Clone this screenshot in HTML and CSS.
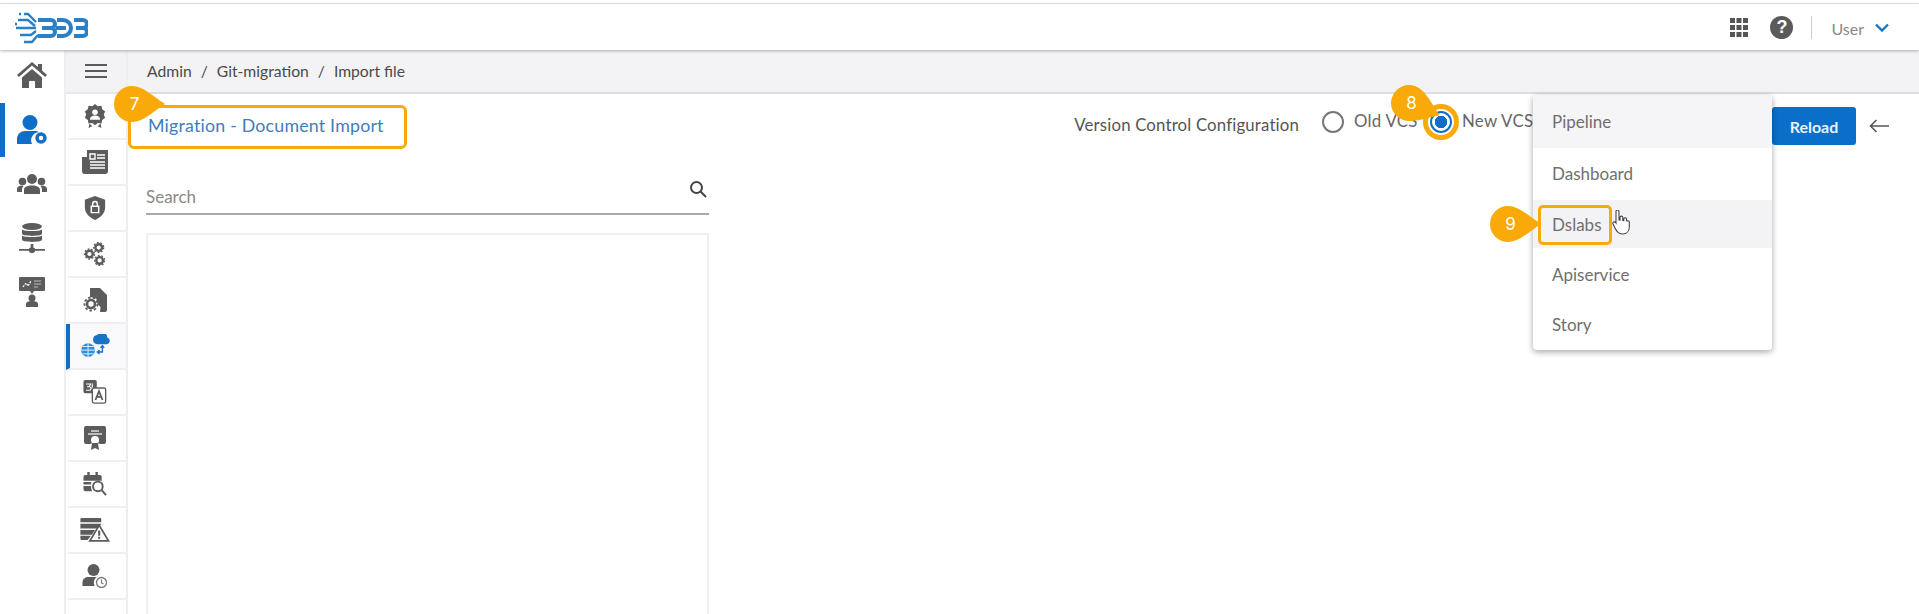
FILE: index.html
```html
<!DOCTYPE html>
<html lang="en">
<head>
<meta charset="utf-8">
<title>Migration - Document Import</title>
<link rel="stylesheet" href="styles.css">
</head>
<body>
<svg class="defs" width="0" height="0" aria-hidden="true"><defs>
  <path id="drop" d="M18 0C29 0 40 11 51 18C40 25 29 36 18 36A18 18 0 0 1 18 0Z"/>
</defs></svg>
<header class="header">
  <svg class="logo" viewBox="0 0 73 33" fill="none" stroke="#2a80c4" stroke-width="4">
    <path d="M23 9H36a4 4 0 0 1 0 8H27M36 17a4 4 0 0 1 0 8H23"/>
    <path d="M42 9h6a8 8 0 0 1 0 16h-6M41 17h10"/>
    <path d="M59 9h9a4 4 0 0 1 0 8h-7M68 17a4 4 0 0 1 0 8h-9"/>
    <path stroke-width="2.400" d="M9 3h4l8 8M3 9h10l7 6M1 17h20M5 24h11l5-4M9 31h8l6-7"/>
    <path stroke-width="2.600" stroke-dasharray="2 3" d="M4 3h3M0 13h3"/>
  </svg>
  <div class="header-tools">
    <svg class="apps" viewBox="0 0 18 19" fill="#555"><path d="M0 0h5v5H0zM6.500 0h5v5h-5zM13 0h5v5h-5zM0 7h5v5H0zM6.500 7h5v5h-5zM13 7h5v5h-5zM0 14h5v5H0zM6.500 14h5v5h-5zM13 14h5v5h-5z"/></svg>
    <span class="help">?</span>
    <span class="divider"></span>
    <span class="user">User</span>
    <svg class="chevron" viewBox="0 0 14 9" fill="none" stroke="#1b76c4" stroke-width="2.400"><path d="M1 1.500l6 6 6-6"/></svg>
  </div>
</header>
<main class="main">
  <nav class="rail">
    <div class="rail-item first"><svg viewBox="0 0 30 26" fill="#5c5c5c"><path d="M15 0L0 13l1.800 2L15 3.600 28.200 15l1.800-2-5-4.400V2h-4v3.100zM5 15.500V26h7v-7h6v7h7V15.500L15 7z"/></svg></div>
    <div class="rail-item active"><svg viewBox="0 0 30 30" fill="#0f6fc6"><circle cx="13" cy="7.500" r="7.500"/><path d="M0 29v-5c0-5 4-8 8-8h10c1.500 0 3 .5 4 1.300A8 8 0 0 0 15 29z"/><circle cx="24" cy="23" r="4" fill="none" stroke="#0f6fc6" stroke-width="3.400"/></svg></div>
    <div class="rail-item"><svg viewBox="0 0 30 20" fill="#5c5c5c"><circle cx="15" cy="5" r="5"/><circle cx="5.500" cy="7.500" r="3.800"/><circle cx="24.500" cy="7.500" r="3.800"/><path d="M7 20v-4c0-3 3-4.500 8-4.500s8 1.500 8 4.500v4zM0 18v-3c0-2 2-3.500 5.500-3.500l1 .5C5.500 13 5 14.500 5 16v2zM30 18v-3c0-2-2-3.500-5.500-3.500l-1 .5c1 1 1.500 2.500 1.500 4v2z"/></svg></div>
    <div class="rail-item"><svg viewBox="0 0 26 30" fill="#5c5c5c"><ellipse cx="13" cy="3.500" rx="10" ry="3.500"/><path d="M3 6.500c2 2 18 2 20 0V11c-2 2.500-18 2.500-20 0zM3 12.500c2 2 18 2 20 0V17c-2 2.500-18 2.500-20 0zM11.700 21h2.600v3.500a3 3 0 0 1 2 1.500H26v1.800h-9.700a3.500 3.500 0 0 1-6.600 0H0V26h9.700a3 3 0 0 1 2-1.500z"/></svg></div>
    <div class="rail-item"><svg viewBox="0 0 26 30" fill="#5c5c5c"><path d="M1 0h24a1 1 0 0 1 1 1v12a1 1 0 0 1-1 1H15l-2 3-2-3H1a1 1 0 0 1-1-1V1a1 1 0 0 1 1-1z"/><path d="M4 10l3-4 2 3 3-5" fill="none" stroke="#fff" stroke-width="1.200" stroke-dasharray="2 1"/><path d="M15 4h7M15 7h7M15 10h4" stroke="#bbb" stroke-width="1.200"/><circle cx="13" cy="21" r="3.500"/><path d="M7 30v-3c0-2 2-3 6-3s6 1 6 3v3z"/></svg></div>
  </nav>
  <nav class="subrail">
    <div class="menu-cell"><svg viewBox="0 0 22 14" fill="#5a5a5a"><path d="M0 0h22v2H0zM0 6h22v2H0zM0 12h22v2H0z"/></svg></div>
    <div class="sub-item"><svg viewBox="0 0 24 26" fill="#5c5c5c"><path d="M12 0l3 2.500 4-.5.800 3.700L23 8l-1.500 3.500L23 15l-3.200 2.300-.8 3.700-4-.5-3 2.500-3-2.500-4 .5-.8-3.700L1 15l1.500-3.500L1 8l3.200-2.300L5 2l4 .5z"/><circle cx="12" cy="9" r="3" fill="#fff"/><path d="M6.500 17c0-3 2.500-4.500 5.500-4.500s5.500 1.500 5.500 4.500z" fill="#fff"/><path d="M6 21l-1 5 4-2zM18 21l1 5-4-2z"/></svg></div>
    <div class="sub-item"><svg viewBox="0 0 26 24" fill="#5c5c5c"><path d="M5 0h21v21a3 3 0 0 1-3 3H3a3 3 0 0 1-3-3V7h5z"/><path d="M8 4h5v5H8zM15 5h8M15 8h8M8 12h15M8 15h15M8 18h15" stroke="#fff" stroke-width="1.400" fill="none"/></svg></div>
    <div class="sub-item"><svg viewBox="0 0 22 26" fill="#5c5c5c"><path d="M11 0l11 4v8c0 7-5 11.500-11 14C5 23.500 0 19 0 12V4z"/><path d="M7 11h8v7H7zM8.500 11V8.500a2.500 2.500 0 0 1 5 0V11" fill="none" stroke="#fff" stroke-width="1.600"/></svg></div>
    <div class="sub-item"><svg viewBox="0 0 24 26" fill="none" stroke="#5c5c5c"><circle cx="16" cy="6" r="3.600" stroke-width="2.600"/><circle cx="6" cy="13" r="3.600" stroke-width="2.600"/><circle cx="17" cy="20" r="3.600" stroke-width="2.600"/><circle cx="16" cy="6" r="5.400" stroke-width="1.400" stroke-dasharray="2 1.800"/><circle cx="6" cy="13" r="5.400" stroke-width="1.400" stroke-dasharray="2 1.800"/><circle cx="17" cy="20" r="5.400" stroke-width="1.400" stroke-dasharray="2 1.800"/></svg></div>
    <div class="sub-item"><svg viewBox="0 0 24 24" fill="#5c5c5c"><path d="M7 0h10l7 7v15a2 2 0 0 1-2 2h-5l.5-5-3-3-1-5-3-1.500L7 9z"/><circle cx="8" cy="16" r="4" fill="none" stroke="#5c5c5c" stroke-width="2.600"/><circle cx="8" cy="16" r="6.500" fill="none" stroke="#5c5c5c" stroke-width="1.800" stroke-dasharray="2.500 2"/></svg></div>
    <div class="sub-item current"><svg viewBox="0 0 30 26" fill="#2e8fe0"><circle cx="7.500" cy="17.500" r="7.500"/><path d="M0 17.500h15M7.500 10v15M1.500 13.500h12M1.500 21.500h12" stroke="#fff" stroke-width=".9"/><path d="M17 11a5 5 0 0 1 .5-9.900A6 6 0 0 1 28.500 4 3.600 3.600 0 0 1 27 11z" fill="#1673c8"/><path d="M23 13v6.500h-5M20 21.500l-2.500-2 2.500-2M21 15l2-2.500 2 2.500" fill="none" stroke="#1673c8" stroke-width="1.500"/></svg></div>
    <div class="sub-item"><svg viewBox="0 0 26 27" fill="#5c5c5c"><rect width="15" height="15" rx="2"/><path d="M3 4.500h5l-1.500 3H4M7 7.500a2 2 0 0 1-1 4H3M10 4v7" stroke="#fff" stroke-width="1.200" fill="none"/><rect x="10" y="9" width="15" height="17" rx="2" fill="#fff" stroke="#5c5c5c" stroke-width="1.500"/><path d="M13.500 22.500l4-10 4 10M15 19h5" fill="none" stroke="#5c5c5c" stroke-width="2"/></svg></div>
    <div class="sub-item"><svg viewBox="0 0 22 24" fill="#5c5c5c"><path d="M2 0h18a2 2 0 0 1 2 2v14a2 2 0 0 1-2 2h-4l-5-2-5 2H2a2 2 0 0 1-2-2V2a2 2 0 0 1 2-2z"/><path d="M7 5h8M4 8h14" stroke="#ddd" stroke-width="1.300"/><circle cx="11" cy="14" r="4" fill="#fff"/><path d="M7 24l1-7h6l1 7-4-2z"/></svg></div>
    <div class="sub-item"><svg viewBox="0 0 24 25" fill="#5c5c5c"><path d="M0 5a2 2 0 0 1 2-2h2V0h2.500v3h6V0H15v3h2a2 2 0 0 1 2 2v4H0zM0 10.500h8V13H0zM0 14.500h8V18H8.500a7 7 0 0 0 .5 2H2a2 2 0 0 1-2-2z"/><circle cx="15" cy="15" r="5" fill="#fff" stroke="#5c5c5c" stroke-width="2"/><path d="M19 19l4.500 5" stroke="#5c5c5c" stroke-width="2"/></svg></div>
    <div class="sub-item"><svg viewBox="0 0 28 23" fill="#5c5c5c"><path d="M1 0h18a1 1 0 0 1 1 1v3H0V1a1 1 0 0 1 1-1zM0 5.500h20v.5l-4 4H0zM0 11.500h14L11 16H0zM0 17h10l-3 4H1a1 1 0 0 1-1-1z"/><path d="M18 7L27 22H9z" fill="#fff" stroke="#5c5c5c" stroke-width="1.600"/><path d="M17 12h2v5h-2zM17 18h2v2h-2z"/></svg></div>
    <div class="sub-item"><svg viewBox="0 0 25 24" fill="#5c5c5c"><circle cx="11" cy="6" r="6"/><path d="M0 22v-4c0-3 3-5 6-5h8a8 8 0 0 0-2 9z"/><circle cx="19" cy="18.500" r="5" fill="#fff" stroke="#777" stroke-width="1.300"/><path d="M19 15.500v3.500l2 1" fill="none" stroke="#777" stroke-width="1.200"/></svg></div>
    <div class="sub-item"></div>
  </nav>
  <section class="content">
    <div class="breadcrumb"><span>Admin</span><span>/</span><span>Git-migration</span><span>/</span><span>Import file</span></div>
    <div class="toolbar">
      <h1 class="title">Migration - Document Import</h1>
      <div class="config">
        <span class="config-label">Version Control Configuration</span>
        <span class="radio"></span><span class="radio-label">Old VCS</span>
        <span class="radio checked"></span><span class="radio-label">New VCS</span>
        <button class="reload">Reload</button>
        <svg class="back" viewBox="0 0 20 14" fill="none" stroke="#555" stroke-width="1.600"><path d="M20 7H1.500M7.500 1L1.500 7l6 6"/></svg>
      </div>
    </div>
    <div class="left-col">
      <div class="search"><span>Search</span><svg viewBox="0 0 18 18" fill="none" stroke="#444" stroke-width="2"><circle cx="7.500" cy="7.500" r="5.500"/><path d="M11.500 11.500L17 17"/></svg></div>
      <div class="panel"></div>
    </div>
  </section>
</main>

<div class="dropdown">
  <div class="opt soft">Pipeline</div>
  <div class="opt">Dashboard</div>
  <div class="opt hover">Dslabs</div>
  <div class="opt">Apiservice</div>
  <div class="opt">Story</div>
</div>
<svg class="hand" viewBox="0 0 18 25" fill="#fff" stroke="#444" stroke-width="1.100"><path d="M4 1.500a1.500 1.500 0 0 1 3 0V10l1 .2V7.500a1.400 1.400 0 0 1 2.800 0v3l1 .2V8.800a1.400 1.400 0 0 1 2.700 0v2l.8.200a1.300 1.300 0 0 1 2 1V17c0 4-2.500 7-6.500 7-3.500 0-5.500-1.500-7-4.500L1 14c-.8-1.800 1.500-3 2.800-1.300l.2.300z"/></svg>

<div class="mark mark-title"></div>
<div class="mark mark-radio"></div>
<div class="mark mark-opt"></div>
<div class="badge b7"><svg viewBox="0 0 51 36"><use href="#drop"/></svg><span>7</span></div>
<div class="badge b8"><svg viewBox="0 0 51 36"><use href="#drop"/></svg><span>8</span></div>
<div class="badge b9"><svg viewBox="0 0 51 36"><use href="#drop"/></svg><span>9</span></div>
</body>
</html>
```

FILE: styles.css
```css
* { box-sizing: border-box; }
html, body { margin: 0; height: 614px; overflow: hidden; }
body {
  position: relative;
  background: #fff;
  color: #555;
  font-family: Lato, "Noto Sans", sans-serif;
  padding-top: 4px;
}
body::before {
  content: "";
  position: absolute;
  left: 0; right: 0; top: 3px;
  height: 1px;
  background: #e4e4e4;
}
.defs { position: absolute; }

.header {
  height: 46px;
  display: flex;
  align-items: center;
  justify-content: space-between;
  padding: 0 30px 0 15px;
  background: #fff;
  box-shadow: 0 1px 3px rgba(0,0,0,.3);
  position: relative;
  z-index: 2;
}
.logo { width: 73px; height: 33px; }
.header-tools { display: flex; align-items: center; }
.apps { width: 18px; height: 19px; margin-right: 22px; }
.help {
  width: 23px; height: 23px;
  border-radius: 50%;
  background: #5a5a5a;
  color: #fff;
  font: 700 18px/23px "Liberation Sans", sans-serif;
  text-align: center;
  margin-right: 18px;
}
.divider { width: 1px; height: 23px; background: #ccc; margin-right: 19px; }
.user { font-size: 16px; color: #888; margin: 2px 11px 0 0; }
.chevron { width: 14px; height: 9px; }

.main { display: flex; height: 564px; overflow: hidden; }
.rail { width: 64px; flex: none; }
.rail-item { height: 54px; display: flex; align-items: center; justify-content: center; border-left: 5px solid transparent; padding-right: 5px; }
.rail-item.first { height: 53px; padding-bottom: 3px; }
.rail-item svg { width: 30px; height: 30px; }
.rail-item.active { border-left-color: #0f6fc6; }

.subrail { width: 64px; flex: none; border-left: 2px solid #eee; border-right: 2px solid #eee; }
.menu-cell { height: 44px; background: #f3f3f5; display: flex; align-items: center; justify-content: center; border-bottom: 2px solid #e8e8e8; }
.menu-cell svg { width: 22px; height: 14px; }
.sub-item { height: 46px; display: flex; align-items: center; justify-content: center; border-bottom: 2px solid #eee; border-left: 4px solid transparent; }
.sub-item svg { width: 30px; height: 24px; margin-left: -7px; }
.sub-item.current { border-left-color: #0f6fc6; background: #f9f9fb; }

.content { flex: 1; min-width: 0; }
.breadcrumb {
  height: 44px;
  display: flex;
  align-items: center;
  gap: 9px;
  padding-left: 19px;
  background: #f3f3f5;
  border-bottom: 2px solid #ddd;
  font-size: 15.700px;
  color: #4a4a4a;
}
.toolbar {
  height: 56px;
  display: flex;
  align-items: center;
  justify-content: space-between;
  padding: 0 30px 0 20px;
}
.title { margin: 6px 0 0; font-size: 17.800px; font-weight: 400; color: #3f7cc0; letter-spacing: .2px; }
.config { display: flex; align-items: center; }
.config-label { font-size: 16.800px; color: #555; margin: 4px 23px 0 0; letter-spacing: .17px; }
.radio { width: 22px; height: 22px; border-radius: 50%; border: 2px solid #777; background: #fff; }
.radio.checked { border-color: #0f6fc6; background: radial-gradient(circle, #0f6fc6 0 6px, #fff 6.500px); margin-left: 12px; }
.radio-label { font-size: 16.800px; color: #666; margin: -4px 0 0 10px; letter-spacing: .3px; width: 64px; white-space: nowrap; }
.radio.checked + .radio-label { margin-left: 10px; width: 71px; }
.reload {
  width: 84px; height: 38px;
  margin: 8px 13px 0 239px;
  border: 0;
  border-radius: 3px;
  background: #0a6fc8;
  color: #e8f2fb;
  font: 700 16px Lato, sans-serif;
}
.back { width: 20px; height: 14px; margin-top: 8px; }

.left-col { width: 563px; margin-left: 18px; padding-top: 28px; }
.search {
  height: 37px;
  display: flex;
  justify-content: space-between;
  align-items: flex-start;
  padding-top: 4px;
  border-bottom: 2px solid #aaa;
  font-size: 17px;
  color: #8a8a8a;
}
.search span { padding-top: 4px; }
.search svg { width: 18px; height: 18px; margin-right: 2px; margin-top: -2px; }
.panel { height: 420px; margin-top: 18px; border: 2px solid #f0f0f0; }

.dropdown {
  position: absolute;
  left: 1533px; top: 95px;
  width: 239px; height: 255px;
  background: #fff;
  border-radius: 4px;
  box-shadow: 0 2px 6px rgba(0,0,0,.35);
  z-index: 3;
}
.opt { height: 50.500px; display: flex; align-items: center; padding-left: 19px; font-size: 17px; color: #6f6f6f; }
.opt.soft { background: #f5f5f7; height: 53px; }
.opt.hover { background: #f3f3f5; height: 48px; margin: 1.500px 0 1px; }

.hand { position: absolute; left: 1612px; top: 210px; width: 18px; height: 25px; z-index: 6; }

.mark { position: absolute; border: 3.500px solid #f9a908; z-index: 5; }
.mark-title { left: 128px; top: 105px; width: 279px; height: 44px; border-radius: 6px; }
.mark-radio { left: 1423px; top: 104px; width: 36px; height: 36px; border-width: 5px; border-radius: 50%; }
.mark-opt { left: 1538px; top: 205px; width: 74px; height: 40px; border-radius: 5px; }

.badge { position: absolute; width: 51px; height: 36px; z-index: 6; }
.badge svg { position: absolute; inset: 0; width: 51px; height: 36px; fill: #f9a908; }
.badge span { position: absolute; left: 0; top: 0; width: 41px; text-align: center; color: #fff; font: 400 17px/36px Inter, sans-serif; }
.b7 { left: 114px; top: 86px; }
.b8 { left: 1391px; top: 85px; }
.b8 svg { transform: rotate(22deg); transform-origin: 18px 18px; }
.b9 { left: 1490px; top: 206px; }
```
